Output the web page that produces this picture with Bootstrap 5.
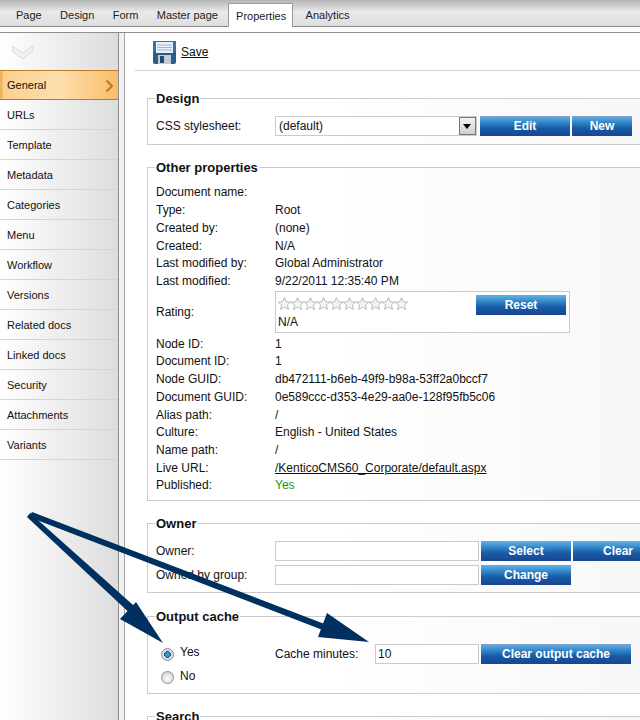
<!DOCTYPE html>
<html lang="en">
<head>
<meta charset="utf-8">
<title>Properties</title>
<link href="https://cdn.jsdelivr.net/npm/bootstrap@5.3.0/dist/css/bootstrap.min.css" rel="stylesheet">
<style>
html,body{height:720px;overflow:hidden}
body{font-family:"Liberation Sans",Arial,sans-serif;font-size:12px;line-height:14px;color:#111;background:#fff;position:relative;width:640px}
.topbar{height:27px;background:linear-gradient(#b4b4b4,#e9e9e9 45%,#dedede);border-bottom:1px solid #8a8a8a;padding-left:4px;font-size:11px}
.tabitem{color:#222;height:23px;margin-top:3px;padding:5px 9.2px 0}
.tabitem.first{padding-left:12px}
.tabitem.after{padding-left:12.5px}
.tabitem.on{background:#fff;border:1px solid #9a9a9a;border-bottom:0;height:24px;padding:5px 7px 0;margin-left:1px;width:65px;flex:none}
.gapstrip{background:#fff;border-bottom:1px solid #8f8f8f;height:6px}
.mainarea{height:687px;overflow:hidden}
.sidecol{width:119px;flex:none;background:linear-gradient(90deg,#fff,#ddd);border-right:1px solid #8f8f8f;font-size:11px}
.sidehead{height:37px;padding:11px 0 0 12px;background:linear-gradient(90deg,#fff,#dcdcdc)}
.sideitem{height:30px;line-height:30px;padding-left:7px;border-bottom:1px solid #d4d4d4;color:#111}
.sideitem.on{border-top:1px solid #c07a26;border-bottom:1px solid #c07a26;background:linear-gradient(90deg,#f2b257 2px,#fbd08f 3px,#fddfae 50%,#f8bd68);line-height:28px;position:relative}
.sideitem .chev{position:absolute;right:5px;top:9px}
.splitter{flex:none;background:#f1f1f1;border-right:1px solid #a5a5a5;width:6px}
.pagecol{width:560px;flex:none}
.savebar{height:38px;margin-left:10px;border-bottom:1px solid #cfcfcf;padding:8px 0 0 18px}
.savebar a{color:#111;margin-left:5px;margin-top:4px}
.groupbox{position:relative;margin-left:22px;width:540px;border:1px solid #cbcbcb;border-right:0;background:linear-gradient(90deg,#fff 35%,#f6f6f6)}
.grouptitle{position:absolute;left:7px;top:-8px;font-weight:700;font-size:13px;line-height:15px;background:#fff;padding:0 1px;color:#111}
.fieldrow{display:flex;align-items:center;height:17.7px;padding-left:8px}
.fieldrow>.lbl{width:119px;flex:none}
.textbox{height:20px;width:204px;flex:none;background:#fff;border:1px solid #cacaca;padding:0 2px;line-height:18px;font-size:12px;border-radius:0}
.bluebtn{height:20px;padding:0 0 1px;border:0;border-top:1px solid #7f9fc8;font-weight:700;font-size:12px;line-height:17px;color:#fff;background:linear-gradient(#57aee6,#2673b8 42%,#175aa5 60%,#1a4590);flex:none;border-radius:0}
.bluebtn:hover{color:#fff}
.w90{width:90px}.w60{width:60px}.w150{width:150px}
.combo{width:202px;height:20px;flex:none;background:#fff;border:1px solid #cacaca;padding-left:3px;line-height:18px;position:relative}
.combo i{position:absolute;right:0;top:0;width:17px;height:18px;background:linear-gradient(#f4f4f4,#cfcfcf);border:1px solid #777}
.combo i::after{content:"";position:absolute;left:3px;top:6px;border:4px solid transparent;border-top:5px solid #000}
.ratebox{width:295px;height:42px;flex:none;background:#fff;border:1px solid #cacaca;padding:5px 2px;position:relative;line-height:14px}
.ratebox .bluebtn{position:absolute;right:3px;top:3px}
.stars{display:block;height:14px;margin-bottom:4px}
.radiodot{width:13px;height:13px;border-radius:50%;border:1px solid #8f8f8f;background:radial-gradient(circle at 50% 60%,#fff,#c8c8c8);margin:0;flex:none;appearance:none;display:block}
.radiodot:checked{background:radial-gradient(circle,#2a9ad0 0 2px,#0e4f80 3.2px,#e8e8e8 3.6px,#b5b5b5)}
.arrows{position:absolute;left:0;top:0;pointer-events:none}
.yesgreen{color:#129a12}
.liveurl{color:#111}
.otherbox{padding-top:15.6px}
.raterow{height:45.2px!important}
</style>
</head>
<body>
<nav class="topbar d-flex align-items-start">
  <div class="tabitem first">Page</div>
  <div class="tabitem">Design</div>
  <div class="tabitem">Form</div>
  <div class="tabitem">Master page</div>
  <div class="tabitem on">Properties</div>
  <div class="tabitem after">Analytics</div>
</nav>
<div class="gapstrip"></div>
<div class="mainarea d-flex">
  <aside class="sidecol">
    <div class="sidehead">
      <svg width="22" height="15" viewBox="0 0 22 15"><path d="M0 1 L11 8 L21 1 L21 6 L11 14 L0 6Z" fill="#f1f1f1" stroke="#d8d8d8"/></svg>
    </div>
    <div class="sideitem on">General<svg class="chev" width="7" height="12" viewBox="0 0 7 12"><path d="M0.5 0.5 L6 6 L0.5 11.500" fill="none" stroke="#b87a2c" stroke-width="2"/></svg></div>
    <div class="sideitem">URLs</div>
    <div class="sideitem">Template</div>
    <div class="sideitem">Metadata</div>
    <div class="sideitem">Categories</div>
    <div class="sideitem">Menu</div>
    <div class="sideitem">Workflow</div>
    <div class="sideitem">Versions</div>
    <div class="sideitem">Related docs</div>
    <div class="sideitem">Linked docs</div>
    <div class="sideitem">Security</div>
    <div class="sideitem">Attachments</div>
    <div class="sideitem">Variants</div>
  </aside>
  <div class="splitter"></div>
  <main class="pagecol">
    <div class="savebar d-flex align-items-start">
      <svg width="23" height="23" viewBox="0 0 23 23"><rect width="23" height="23" rx="2" fill="#2b5c88"/><rect width="23" height="11" fill="#3c6f9c"/><rect x="3" y="1" width="17" height="11" fill="#e8eff8"/><path d="M4 4h15M4 6.500h15M4 9h15" stroke="#9db9d8"/><rect x="5" y="14" width="13" height="9" fill="#c3ccd6"/><rect x="7" y="15" width="4" height="7" fill="#2b4866"/></svg>
      <a href="#">Save</a>
    </div>
    <section class="groupbox" style="margin-top:27px;height:47px">
      <div class="grouptitle">Design</div>
      <div class="fieldrow" style="height:20px;margin-top:17px">
        <span class="lbl">CSS stylesheet:</span>
        <div class="combo">(default)<i></i></div>
        <button class="btn bluebtn w90" style="margin-left:3px">Edit</button>
        <button class="btn bluebtn w60" style="margin-left:2px">New</button>
      </div>
    </section>
    <section class="groupbox otherbox" style="margin-top:22px;height:334px">
      <div class="grouptitle">Other properties</div>
      <div class="fieldrow"><span class="lbl">Document name:</span></div>
      <div class="fieldrow"><span class="lbl">Type:</span><span>Root</span></div>
      <div class="fieldrow"><span class="lbl">Created by:</span><span>(none)</span></div>
      <div class="fieldrow"><span class="lbl">Created:</span><span>N/A</span></div>
      <div class="fieldrow"><span class="lbl">Last modified by:</span><span>Global Administrator</span></div>
      <div class="fieldrow"><span class="lbl">Last modified:</span><span>9/22/2011 12:35:40 PM</span></div>
      <div class="fieldrow raterow"><span class="lbl">Rating:</span>
        <div class="ratebox">
          <svg class="stars" width="130" height="14" viewBox="0 0 130 14"><defs><polygon id="st" points="6.500,0.500 8.300,4.800 12.800,5.100 9.400,8 10.500,12.500 6.500,10 2.500,12.500 3.600,8 0.200,5.100 4.700,4.800" fill="#f4f4f4" stroke="#bdbdbd"/></defs><use href="#st" x="0"/><use href="#st" x="13"/><use href="#st" x="26"/><use href="#st" x="39"/><use href="#st" x="52"/><use href="#st" x="65"/><use href="#st" x="78"/><use href="#st" x="91"/><use href="#st" x="104"/><use href="#st" x="117"/></svg>
          N/A
          <button class="btn bluebtn w90">Reset</button>
        </div>
      </div>
      <div class="fieldrow"><span class="lbl">Node ID:</span><span>1</span></div>
      <div class="fieldrow"><span class="lbl">Document ID:</span><span>1</span></div>
      <div class="fieldrow"><span class="lbl">Node GUID:</span><span>db472111-b6eb-49f9-b98a-53ff2a0bccf7</span></div>
      <div class="fieldrow"><span class="lbl">Document GUID:</span><span>0e589ccc-d353-4e29-aa0e-128f95fb5c06</span></div>
      <div class="fieldrow"><span class="lbl">Alias path:</span><span>/</span></div>
      <div class="fieldrow"><span class="lbl">Culture:</span><span>English - United States</span></div>
      <div class="fieldrow"><span class="lbl">Name path:</span><span>/</span></div>
      <div class="fieldrow"><span class="lbl">Live URL:</span><a class="liveurl" href="#">/KenticoCMS60_Corporate/default.aspx</a></div>
      <div class="fieldrow"><span class="lbl">Published:</span><span class="yesgreen">Yes</span></div>
    </section>
    <section class="groupbox" style="margin-top:22px;height:70px;padding-top:17px">
      <div class="grouptitle">Owner</div>
      <div class="fieldrow" style="height:20px"><span class="lbl">Owner:</span><div class="textbox"></div>
        <button class="btn bluebtn w90" style="margin-left:2px">Select</button>
        <button class="btn bluebtn w90" style="margin-left:2px">Clear</button>
      </div>
      <div class="fieldrow" style="height:20px;margin-top:4px"><span class="lbl">Owned by group:</span><div class="textbox"></div>
        <button class="btn bluebtn w90" style="margin-left:2px">Change</button>
      </div>
    </section>
    <section class="groupbox" style="margin-top:23px;height:78px">
      <div class="grouptitle">Output cache</div>
      <div class="d-flex">
        <div style="width:127px;padding:29px 0 0 13px">
          <label class="d-flex align-items-start" style="gap:6px"><input class="radiodot" type="radio" name="oc" checked style="margin-top:2px"><span style="margin-top:-1px">Yes</span></label>
          <label class="d-flex align-items-start" style="gap:6px;margin-top:10px"><input class="radiodot" type="radio" name="oc"><span style="margin-top:-2px">No</span></label>
        </div>
        <div class="d-flex align-items-center" style="margin-top:27px;height:20px">
          <span style="width:100px;flex:none;margin-top:-1px">Cache minutes:</span>
          <div class="textbox" style="width:104px">10</div>
          <button class="btn bluebtn w150" style="margin-left:2px">Clear output cache</button>
        </div>
      </div>
    </section>
    <section class="groupbox" style="margin-top:22px;height:60px">
      <div class="grouptitle">Search</div>
    </section>
  </main>
</div>
<svg class="arrows" width="640" height="720" viewBox="0 0 640 720">
  <g fill="#00305f" stroke="none">
    <polygon points="30,513 142,613 136,619 27,517"/>
    <polygon points="136,602 163,643 120,619"/>
    <polygon points="32,512 335,628 333,634 29,517"/>
    <polygon points="327,613 369,642 318,637"/>
  </g>
</svg>
<script src="https://cdn.jsdelivr.net/npm/bootstrap@5.3.0/dist/js/bootstrap.bundle.min.js"></script>
</body>
</html>
